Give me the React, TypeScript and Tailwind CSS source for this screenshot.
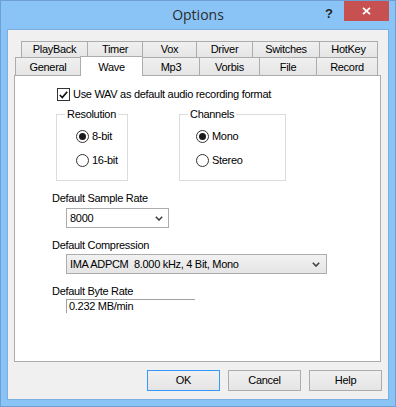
import React from "react";

const font = { fontFamily: '"Liberation Sans", Arial, sans-serif', letterSpacing: "-0.3px" };

function Chevron() {
  return (
    <svg width="8" height="5" viewBox="0 0 8 5" className="shrink-0">
      <path d="M0.8 0.8 L4 4 L7.2 0.8" fill="none" stroke="#404040" strokeWidth="1.6" />
    </svg>
  );
}

function Radio({ checked, label }: { checked?: boolean; label: string }) {
  return (
    <div className="flex items-center h-[13px]">
      <span className="w-[13px] h-[13px] rounded-full border border-[#333] bg-white flex items-center justify-center">
        {checked && <span className="w-[7px] h-[7px] rounded-full bg-[#1a1a1a]" />}
      </span>
      <span className="ml-[3px] leading-[13px]">{label}</span>
    </div>
  );
}

function GroupBox({
  title,
  width,
  radioLeft,
  children,
}: {
  title: string;
  width: string;
  radioLeft: string;
  children: React.ReactNode;
}) {
  return (
    <div className={`relative h-[67px] border border-[#dcdcdc] ${width}`}>
      <span className="absolute -top-[7px] left-[8px] bg-white px-[2px] leading-[13px]">
        {title}
      </span>
      <div className={`flex flex-col gap-[11px] pt-[15px] ${radioLeft}`}>{children}</div>
    </div>
  );
}

const row1 = [
  { label: "PlayBack", w: "w-[66px]" },
  { label: "Timer", w: "w-[55px]" },
  { label: "Vox", w: "w-[54px]" },
  { label: "Driver", w: "w-[56px]" },
  { label: "Switches", w: "w-[67px]" },
  { label: "HotKey", w: "w-[59px] border-r" },
];

const row2 = [
  { label: "General", w: "w-[65px]" },
  { label: "Wave", w: "w-[62px]", active: true },
  { label: "Mp3", w: "w-[57px]" },
  { label: "Vorbis", w: "w-[60px]" },
  { label: "File", w: "w-[57px]" },
  { label: "Record", w: "w-[62px] border-r" },
];

function Button({ label, primary }: { label: string; primary?: boolean }) {
  return (
    <button
      className={`w-[73px] h-[21px] border bg-gradient-to-b from-[#f0f0f0] to-[#e5e5e5] text-[11px] text-black flex items-center justify-center ${
        primary ? "border-[#3399ff]" : "border-[#acacac]"
      }`}
      style={font}
    >
      {label}
    </button>
  );
}

export default function App() {
  return (
    <div className="w-[396px] h-[407px] bg-[#8ac4f6] border border-[#6d9fd3] flex flex-col">
      {/* Title bar */}
      <div className="relative h-[28px] flex items-center justify-center">
        <span
          className="text-[14px] text-[#2b2b2b] pb-[1px]"
          style={{ fontFamily: '"Open Sans", "Noto Sans", sans-serif' }}
        >
          Options
        </span>
        <span
          className="absolute left-[324px] top-[3px] text-[13px] font-bold text-[#222]"
          style={font}
        >
          ?
        </span>
        <div className="absolute right-[6px] top-0 w-[45px] h-[20px] bg-[#c75050] flex items-center justify-center">
          <svg width="9" height="8" viewBox="0 0 9 8">
            <path d="M1 0.8 L8 7.2 M8 0.8 L1 7.2" stroke="white" strokeWidth="1.8" />
          </svg>
        </div>
      </div>

      {/* Client area */}
      <div
        className="mx-[6px] w-[382px] h-[371px] border border-[#7aafe0] bg-[#f0f0f0] text-[11px] text-black"
        style={font}
      >
        <div className="ml-[6px] mt-[11px] w-[367px]">
          {/* Tabs */}
          <div className="flex ml-[7px] h-[16px]">
            {row1.map((t) => (
              <div
                key={t.label}
                className={`${t.w} h-[16px] border-l border-t border-[#acacac] bg-gradient-to-b from-[#f0f0f0] to-[#e5e5e5] flex items-center justify-center leading-none`}
              >
                {t.label}
              </div>
            ))}
          </div>
          <div className="relative z-10 flex ml-[1px] h-[18px] items-start">
            {row2.map((t) =>
              t.active ? (
                <div
                  key={t.label}
                  className={`${t.w} h-[20px] -mt-px border-l border-t border-[#acacac] bg-white flex justify-center pt-[5px] leading-none`}
                >
                  {t.label}
                </div>
              ) : (
                <div
                  key={t.label}
                  className={`${t.w} h-[18px] border-l border-t border-[#acacac] bg-gradient-to-b from-[#f0f0f0] to-[#e5e5e5] flex items-center justify-center leading-none pt-px`}
                >
                  {t.label}
                </div>
              )
            )}
          </div>

          {/* Panel */}
          <div className="h-[287px] border border-[#acacac] bg-white">
            <div className="flex items-center ml-[42px] mt-[12px] h-[13px]">
              <span className="w-[13px] h-[13px] border border-[#333] bg-white flex items-center justify-center">
                <svg width="9" height="8" viewBox="0 0 9 8">
                  <path d="M0.8 4 L3.3 6.6 L8.2 0.8" fill="none" stroke="#111" strokeWidth="1.7" />
                </svg>
              </span>
              <span className="ml-[3px] leading-[13px]">Use WAV as default audio recording format</span>
            </div>

            <div className="flex ml-[41px] mt-[13px] gap-[51px]">
              <GroupBox title="Resolution" width="w-[72px]" radioLeft="pl-[19px]">
                <Radio checked label="8-bit" />
                <Radio label="16-bit" />
              </GroupBox>
              <GroupBox title="Channels" width="w-[107px]" radioLeft="pl-[16px]">
                <Radio checked label="Mono" />
                <Radio label="Stereo" />
              </GroupBox>
            </div>

            <div className="ml-[37px] mt-[11px] leading-[13px]">Default Sample Rate</div>
            <div className="ml-[51px] mt-[3px] w-[103px] h-[20px] border border-[#acacac] bg-white flex items-center justify-between pl-[3px] pr-[5px]">
              <span>8000</span>
              <Chevron />
            </div>

            <div className="ml-[37px] mt-[11px] leading-[13px]">Default Compression</div>
            <div className="ml-[51px] mt-[2px] w-[261px] h-[20px] border border-[#acacac] bg-gradient-to-b from-[#f2f2f2] to-[#e5e5e5] flex items-center justify-between pl-[3px] pr-[6px]">
              <span className="whitespace-pre">IMA ADPCM  8.000 kHz, 4 Bit, Mono</span>
              <Chevron />
            </div>

            <div className="ml-[37px] mt-[11px] leading-[13px]">Default Byte Rate</div>
            <div className="ml-[51px] mt-px w-[129px] h-[14px] border-t border-l border-[#a0a0a0] pl-[2px] leading-[13px]">
              0.232 MB/min
            </div>
          </div>
        </div>

        {/* Buttons */}
        <div className="flex justify-end gap-[8px] mt-[8px] pr-[6px]">
          <Button label="OK" primary />
          <Button label="Cancel" />
          <Button label="Help" />
        </div>
      </div>
    </div>
  );
}
